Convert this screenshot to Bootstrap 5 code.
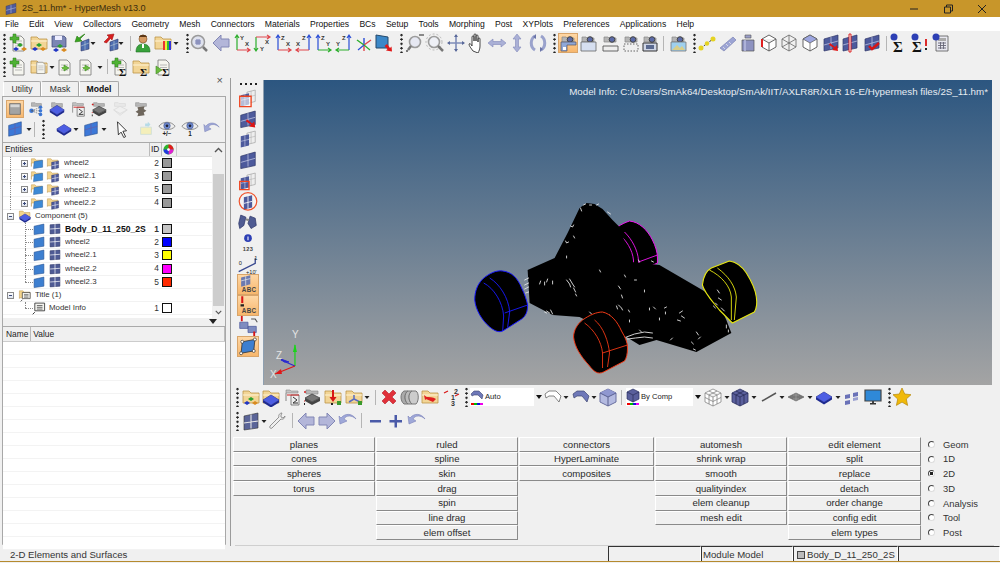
<!DOCTYPE html>
<html lang="en"><head><meta charset="utf-8"><title>HyperMesh</title>
<link href="https://cdn.jsdelivr.net/npm/bootstrap@5.3.0/dist/css/bootstrap.min.css" rel="stylesheet">
<style>
html,body{height:563px;overflow:hidden}
body{font-family:"Liberation Sans",Arial,sans-serif;font-size:9px;line-height:1;background:#f0f0f0;color:#222}
.hm-app{width:1000px;height:563px}
.hm-title{height:17px;background:#c8962a;font-size:9.1px;color:#3a2c10}
.hm-title .ttxt{margin-left:4px}
.hm-win{margin-left:auto;gap:24px;padding-right:13px}
.hm-menu{height:14px;background:#fff;font-size:8.6px;gap:10.25px;padding-left:5px;color:#111}
.hm-tb{height:23px;flex:none}
.hm-tb.one{height:24px}
.ic{width:20px;height:20px;flex:none;display:block}
.dots{width:5px;height:20px;flex:none;background:radial-gradient(circle at 2.5px 2px,#222 1px,transparent 1.3px) 0 0/5px 4.4px repeat-y}
.dots.h{width:20px;height:4px;background:radial-gradient(circle at 2px 2px,#222 1px,transparent 1.3px) 0 0/5px 4px repeat-x}
.sep{width:1px;height:15px;background:#b5b5b5;flex:none}
.drp{width:6px;height:20px;flex:none;display:block}
.l1{margin-left:1px}.l2{margin-left:2px}.l3{margin-left:3px}.l4{margin-left:4px}.l5{margin-left:5px}.l6{margin-left:6px}.l9{margin-left:9px}
.n1{margin-left:-1px}.n3{margin-left:-3px}.n4{margin-left:-4px}
.hm-main{height:468px;flex:none}
.hm-left{width:226px;flex:none;padding-left:2px;position:relative}
.hm-close{position:absolute;right:3px;top:-3px;font-size:11px;color:#555;line-height:1;padding-top:0}
.hm-tabs{height:18px;padding:3px 0 0 1px;border:0;gap:0;align-items:flex-end;font-size:8.6px;flex:none}
.hm-tabs .tabx{height:15px;padding:3px 0 0;width:38px;text-align:center;border:1px solid #a8a8a8;border-bottom:0;border-left-color:#fff;border-radius:2px 2px 0 0;color:#333;background:#f0f0f0;margin:0}
.hm-tabs .tabx.on{font-weight:700;width:40px;color:#111;position:relative}
.hm-box{border:1px solid #a8a8a8;height:449px;background:#f0f0f0;border-bottom-color:#ccc}
.hm-ptb{height:20px;flex:none;padding-left:3px}
.hm-ptb.top{margin-top:2px}
.sel-on{background:linear-gradient(#ffd9a8,#f7b56a);box-shadow:inset 0 0 0 1px #d9a56a}
.ic18{width:18px;height:18px;flex:none;display:block;margin-right:2.3px}
.hm-ptb.top .ic18{margin-right:3px}
.hm-treewrap{height:176px;flex:none;margin-top:3px;border-top:1px solid #aaa}
.hm-tree{width:209px;flex:none;background:#fff}
.hm-thead{height:14px;background:#f0f0f0;border-bottom:1px solid #ddd;font-size:8.4px;color:#222}
.hm-thead .cname{width:147px;padding-left:2px;border-right:1px solid #bbb;height:100%;display:flex;align-items:center}
.hm-thead .cid{width:12px;border-right:1px solid #bbb;height:100%;display:flex;align-items:center;padding-left:1px}
.hm-thead .cclr{width:15px;border-right:1px solid #ccc;height:100%;display:flex;align-items:center;padding-left:1px}
.trow{height:13.2px;border-bottom:1px solid #f2f2f2;font-size:7.9px;color:#333;position:relative}
.trow .nm{flex:1 1 auto;white-space:nowrap;overflow:hidden}
.trow .nm.b{font-weight:700;font-size:8.6px;color:#111}
.trow .idn{width:10px;text-align:right;font-size:8.4px;margin-right:3px;flex:none}
.trow .nm.b + .idn{font-weight:700}
.swt{width:10px;height:10px;border:1px solid #111;flex:none;margin-right:40px}
.sw-g{background:#999}.sw-l{background:#c4c4c4}.sw-b{background:#0000ff}.sw-y{background:#ffff00}.sw-m{background:#ff00ff}.sw-r{background:#ff2a00}.sw-w{background:#fff}
.vl{position:absolute;top:0;bottom:-1px;border-left:1px dotted #888}
.vl.a{left:7px}.vl.b{left:22px}.vl.half{bottom:50%}
.hl{position:absolute;top:50%;border-top:1px dotted #888;left:22px;width:8px}
.pm{width:7px;height:7px;border:1px solid #8a8a8a;background:linear-gradient(#fff,#dde3ee);position:absolute;left:4px;top:3px;display:block}
.pm.in{left:18px}
.pm::before{content:"";position:absolute;left:1px;right:1px;top:2px;height:1px;background:#3b4a7a}
.pm.p::after{content:"";position:absolute;top:1px;bottom:1px;left:2px;width:1px;background:#3b4a7a}
.tic{width:14px;height:14px;flex:none;display:block}
.pad-w{padding-left:27px}.pad-c{padding-left:15px}.pad-k{padding-left:29px}
.gap-a{margin-right:2px}.gap-b{margin-right:4px}.gap-c{margin-right:3px}
.hm-sb{width:13px;flex:none;background:#f0f0f0}
.hm-sb .trk{height:132px;background:#cdcdcd;margin:17px 1px 0}
.hm-sb .ar{height:14px;display:block;width:13px}
.hm-sb .ar.dn{height:11px}
.hm-sash{height:8px;flex:none;position:relative}
.hm-sash::after{content:"";position:absolute;left:206px;top:1px;border:4px solid transparent;border-top:5px solid #222;border-bottom:0}
.hm-prop{flex:1 1 auto;background:#fff;border-top:1px solid #aaa}
.hm-phead{height:15px;background:#f0f0f0;border-bottom:1px solid #ccc;font-size:8.4px;padding-left:1px}
.hm-phead .pc{padding:0 2px;border-right:1px solid #bbb;height:100%;display:flex;align-items:center}
.hm-prop .prow{height:13px;border-bottom:1px solid #f3f3f3}
.hm-sashv{width:5px;flex:none;border-right:1px solid #9b9b9b;margin-right:1px}
.hm-right{width:768px;flex:none}
.hm-top{height:307px;flex:none;padding-top:2px}
.hm-vtb{width:31px;flex:none;padding-left:5px;padding-top:2px}
.hm-vtb .ic{height:20.7px;width:22px}
.hm-vtb .dots.h{margin-bottom:2px;margin-left:2px}
.hm-gfx{width:729px;height:305px;flex:none;background:linear-gradient(#2c5680,#a4a4a4);position:relative;border-left:1px solid #8fa0b0}
.hm-gfx svg{display:block;width:100%;height:100%}
.hm-info{position:absolute;right:4px;top:7px;color:#e8edf2;font-size:9.78px;white-space:nowrap}
.hm-rt{padding-left:3px}
.cmb{height:18px;background:#fff;flex:none;font-size:7.6px;color:#222}
.cmb.a{width:73px}.cmb.c{width:76px}
.cmb .cn{flex:1 1 auto;padding-left:1px}
.cmb .ca{width:9px;height:100%;background:#f0f0f0;display:flex;align-items:center;justify-content:center}
.cmb .ca::after{content:"";border:3.5px solid transparent;border-top:4px solid #111;border-bottom:0}
.cmb .ic14{width:14px;height:18px;display:block;flex:none}
.hm-panel{flex:1 1 auto;padding:5px 0 0 1px;gap:1px;margin-left:0}
.hm-col{gap:0}
.hm-col.w1,.hm-col.w2{width:142px}.hm-col.w3{width:135px}.hm-col.w4{width:132px}.hm-col.w5{width:133px}
.mbtn.btn{--bs-btn-padding-y:0;--bs-btn-padding-x:0;--bs-btn-font-size:9.6px;--bs-btn-border-radius:0;--bs-btn-line-height:1;--bs-btn-color:#2a2a2a;--bs-btn-bg:#f0f0f0;--bs-btn-hover-bg:#f0f0f0;height:14.72px;width:100%;border:0;border-top:1px solid #fff;border-left:1px solid #fff;border-right:1.5px solid #8a8a8a;border-bottom:1.5px solid #8a8a8a;display:block;font-family:inherit}
.hm-rad{padding-left:6px;gap:0;font-size:9.4px;color:#333}
.hm-rad label{height:14.72px;display:flex;align-items:center;gap:8px}
.hm-rad input{appearance:none;width:7px;height:7px;border-radius:50%;margin:0;border:1px solid;border-color:#444 #ddd #ddd #444;background:#fff;flex:none}
.hm-rad input:checked{background:radial-gradient(circle,#222 1.6px,#fff 2px)}
.hm-rule{height:1px;background:#cfcfcf;margin:2px 6px 0 3px;flex:none}
.hm-status{height:15px;flex:none;font-size:9.6px;position:relative}
.hm-status .stx{width:608px;padding-left:10px;padding-top:3px;color:#333}
.hm-status .cellb{height:100%;border-left:1px solid #333;border-top:1px solid #333;border-right:1px solid #fff;display:flex;align-items:center;padding-left:1px;padding-top:1px;color:#333;flex:none}
.w92{width:93px}.w91{width:92px}.w104{width:105px}.w102{width:102px}
.chipb{width:8px;height:8px;border:1px solid #444;background:#bbb;margin:0 2px 0 2px;flex:none}
.hm-foot{height:1px;background:#b58a2e;flex:none}
</style></head>
<body>
<svg width="0" height="0" class="position-absolute" aria-hidden="true"><defs>
<symbol id="fold" viewBox="0 0 20 20"><path d="M2 16V4h6l2 2h8v10z" fill="#f2d596" stroke="#bd9548" stroke-width=".8"/><path d="M2 8h16" stroke="#fff3d4"/></symbol>
<symbol id="balls" viewBox="0 0 20 20"><path d="M10 9l3 2-3 2-3-2z" fill="#2ca02c"/><path d="M6 13l3 2-3 2-3-2z" fill="#2136c4"/><path d="M14 13l3 2-3 2-3-2z" fill="#d98a1e"/></symbol>
<symbol id="page" viewBox="0 0 20 20"><path d="M5 3h8l3 3v12H5z" fill="#f5f5ef" stroke="#777" stroke-width=".8"/><path d="M7 8h7M7 10.500h7M7 13h7" stroke="#aaa" stroke-width=".8"/></symbol>
<symbol id="plus" viewBox="0 0 20 20"><path d="M5 1h3v3h3v3H8v3H5V7H2V4h3z" fill="#4fb233" stroke="#2f7a1c" stroke-width=".5"/></symbol>
<symbol id="mesh" viewBox="0 0 20 20"><path d="M3 6l14-4v13L3 18z" fill="#4d5a9c" stroke="#2f3768" stroke-width=".7"/><path d="M10 4v12M3 12l14-4" stroke="#c9cde6" stroke-width=".7"/></symbol>
<symbol id="meshw" viewBox="0 0 20 20"><path d="M9 4l8-2v11l-8 2z" fill="#eee" stroke="#999" stroke-width=".6"/><path d="M13 3v11M9 9l8-2" stroke="#aaa" stroke-width=".5"/><path d="M3 7l8-2v11l-8 2z" fill="#4d5a9c"/><path d="M7 6v11M3 12l8-2" stroke="#c9cde6" stroke-width=".6"/></symbol>
<symbol id="impc" viewBox="0 0 20 20"><use href="#page"/><use href="#plus"/><use href="#balls" x="2" y="1"/></symbol>
<symbol id="opnc" viewBox="0 0 20 20"><use href="#fold"/><use href="#balls" y="1"/></symbol>
<symbol id="save" viewBox="0 0 20 20"><path d="M3 3h12l2 2v9H3z" fill="#7b86b4" stroke="#3c4576" stroke-width=".7"/><path d="M6 3h7v4H6z" fill="#eef"/><use href="#balls" x="1" y="2"/></symbol>
<symbol id="impm" viewBox="0 0 20 20"><path d="M8 9l8-3v10l-8 2z" fill="#4d6db0" stroke="#2f3768" stroke-width=".6"/><path d="M12 8v9M8 13l8-3" stroke="#cdd" stroke-width=".5"/><path d="M12 1L7 6l2 2-7 1 2-6 2 2 4-3z" fill="#39a51f" stroke="#2b7a17" stroke-width=".6"/></symbol>
<symbol id="expm" viewBox="0 0 20 20"><path d="M8 9l8-3v10l-8 2z" fill="#4d6db0" stroke="#2f3768" stroke-width=".6"/><path d="M12 8v9M8 13l8-3" stroke="#cdd" stroke-width=".5"/><path d="M2 9l5-5-2-2 7-1-2 6-1.500-1.500-4 4.500z" fill="#d71f1f" stroke="#a51515" stroke-width=".6"/></symbol>
<symbol id="pers" viewBox="0 0 20 20"><circle cx="10" cy="6" r="4" fill="#d49a63" stroke="#7a4c21" stroke-width=".6"/><path d="M6 4c1-3 7-3 8 0z" fill="#5b3716"/><path d="M3 19c0-6 3-8 7-8s7 2 7 8z" fill="#38a23c" stroke="#1f6f24" stroke-width=".6"/><path d="M9 11h2v4H9z" fill="#fff"/></symbol>
<symbol id="rain" viewBox="0 0 20 20"><use href="#fold"/><path d="M10 8h2v9h-2z" fill="#e33"/><path d="M12 8h2v9h-2z" fill="#ee3"/><path d="M14 8h2v9h-2z" fill="#3b3"/><path d="M16 8h2v9h-2z" fill="#33d"/></symbol>
<symbol id="zfit" viewBox="0 0 20 20"><circle cx="9" cy="9" r="6.500" fill="#dfe2ee" stroke="#9a9a9a" stroke-width="1.500"/><path d="M14 14l4 4" stroke="#777" stroke-width="2.500"/><path d="M6 8h6M6 10h6M8 6v6M10 6v6" stroke="#6a70a8" stroke-width=".9"/></symbol>
<symbol id="larr" viewBox="0 0 20 20"><path d="M2 10l8-8v4h8v8h-8v4z" fill="#b3b6d9" stroke="#8287b5"/></symbol>
<symbol id="rarr" viewBox="0 0 20 20"><path d="M18 10l-8-8v4H2v8h8v4z" fill="#b3b6d9" stroke="#8287b5"/></symbol>
<symbol id="ax1" viewBox="0 0 20 20"><path d="M5 17V3M3 5l2-3 2 3" fill="none" stroke="#2cae2c" stroke-width="1.200"/><path d="M5 17h13m-3-2l3 2-3 2" fill="none" stroke="#e0474c" stroke-width="1.200"/><text x="8" y="7" class="axt">Y</text><text x="13" y="13" class="axt">X</text></symbol>
<symbol id="ax2" viewBox="0 0 20 20"><path d="M4 4v14M2 15l2 3 2-3" fill="none" stroke="#2cae2c" stroke-width="1.200"/><path d="M4 4h14m-3-2l3 2-3 2" fill="none" stroke="#e0474c" stroke-width="1.200"/><text x="13" y="11" class="axt">X</text><text x="8" y="18" class="axt">Y</text></symbol>
<symbol id="ax3" viewBox="0 0 20 20"><path d="M5 17V3M3 5l2-3 2 3" fill="none" stroke="#2a4ed6" stroke-width="1.200"/><path d="M5 17h13m-3-2l3 2-3 2" fill="none" stroke="#e0474c" stroke-width="1.200"/><text x="8" y="7" class="axt">Z</text><text x="13" y="13" class="axt">X</text></symbol>
<symbol id="ax4" viewBox="0 0 20 20"><path d="M16 17V3M14 5l2-3 2 3" fill="none" stroke="#2a4ed6" stroke-width="1.200"/><path d="M16 17H3m3-2l-3 2 3 2" fill="none" stroke="#e0474c" stroke-width="1.200"/><text x="9" y="7" class="axt">Z</text><text x="3" y="13" class="axt">X</text></symbol>
<symbol id="ax5" viewBox="0 0 20 20"><path d="M5 17V3M3 5l2-3 2 3" fill="none" stroke="#2a4ed6" stroke-width="1.200"/><path d="M5 17h13m-3-2l3 2-3 2" fill="none" stroke="#2cae2c" stroke-width="1.200"/><text x="8" y="7" class="axt">Z</text><text x="13" y="13" class="axt">Y</text></symbol>
<symbol id="ax6" viewBox="0 0 20 20"><path d="M16 17V3M14 5l2-3 2 3" fill="none" stroke="#2a4ed6" stroke-width="1.200"/><path d="M16 17H3m3-2l-3 2 3 2" fill="none" stroke="#2cae2c" stroke-width="1.200"/><text x="9" y="7" class="axt">Z</text><text x="3" y="13" class="axt">Y</text></symbol>
<symbol id="ax7" viewBox="0 0 20 20"><path d="M10 12V5" stroke="#2a4ed6" stroke-width="1.400"/><path d="M10 12l7-5" stroke="#e0474c" stroke-width="1.400"/><path d="M10 12L3 7" stroke="#2cae2c" stroke-width="1.400"/><path d="M10 12v6" stroke="#e0474c" stroke-width="1.400"/><path d="M10 12l6 5" stroke="#2cae2c" stroke-width="1.200"/><path d="M10 12l-6 5" stroke="#2a4ed6" stroke-width="1.200"/></symbol>
<symbol id="scrn" viewBox="0 0 20 20"><path d="M2 2l12 2v11L2 15z" fill="#3c88c8" stroke="#24496b"/><path d="M13 11l3 4 1.500-1.500.5 5-6-1 1.500-1.500-3-3z" fill="#e01818"/></symbol>
<symbol id="zmin" viewBox="0 0 20 20"><circle cx="10" cy="9" r="5.500" fill="#e6e8f2" stroke="#9c9c9c" stroke-width="1.600"/><path d="M6 13l-3 4" stroke="#777" stroke-width="2.500"/><path d="M14 2h5" stroke="#222"/><path d="M1 18h2M2 17v2" stroke="#222" stroke-width=".7"/></symbol>
<symbol id="zdsh" viewBox="0 0 20 20"><circle cx="9" cy="9" r="5.500" fill="#eef0f6" stroke="#9c9c9c" stroke-width="1.600"/><circle cx="9" cy="9" r="8" fill="none" stroke="#aaa" stroke-dasharray="2 2" stroke-width=".8"/><path d="M13 13l5 5" stroke="#777" stroke-width="2.500"/></symbol>
<symbol id="pan" viewBox="0 0 20 20"><path d="M10 2v16M2 10h16" stroke="#7e8cb8" stroke-width="1.600"/><path d="M10 1l-2 3h4zM10 19l-2-3h4zM1 10l3-2v4zM19 10l-3-2v4z" fill="#5b6a9a"/></symbol>
<symbol id="hand" viewBox="0 0 20 20"><path d="M6 18c-2-3-4-5-4-7 1-1 2 0 3 2V4c0-1.500 2-1.500 2 0v4-6c0-1.500 2-1.500 2 0v6-5c0-1.500 2-1.500 2 0v6-3c0-1.500 2-1.500 2 0v7c0 3-1 5-2 7z" fill="#fff" stroke="#333" stroke-width=".9"/></symbol>
<symbol id="lr" viewBox="0 0 20 20"><path d="M1 10l5-4v2.500h8V6l5 4-5 4v-2.500H6V14z" fill="#aab0d6" stroke="#8188b8" stroke-width=".6"/></symbol>
<symbol id="ud" viewBox="0 0 20 20"><path d="M10 1l4 5h-2.500v8H14l-4 5-4-5h2.500V6H6z" fill="#aab0d6" stroke="#8188b8" stroke-width=".6"/></symbol>
<symbol id="rot" viewBox="0 0 20 20"><path d="M7 3c-5 3-5 11 0 14M13 3c5 3 5 11 0 14" fill="none" stroke="#9aa2cc" stroke-width="3"/><path d="M8 1v5l-3-2zM12 19v-5l3 2z" fill="#6b75a8"/></symbol>
<symbol id="cam" viewBox="0 0 20 20"><path d="M4 9V4h4l1 1h7v4z" fill="#b6b6b6" stroke="#888" stroke-width=".7"/><circle cx="12" cy="6.500" r="2.800" fill="#5b6aa8" stroke="#444"/></symbol>
<symbol id="vw1" viewBox="0 0 20 20"><use href="#cam"/><path d="M3 9h15v3H9v6H3z" fill="#8fa8d8" stroke="#556" stroke-width=".7"/><path d="M5 14h3v3H5z" fill="#fff"/></symbol>
<symbol id="vw2" viewBox="0 0 20 20"><use href="#cam"/><path d="M3 9h15v9H3z" fill="#d6dff0" stroke="#666" stroke-width=".8"/></symbol>
<symbol id="vw3" viewBox="0 0 20 20"><use href="#cam"/><path d="M3 13h15v5H3z" fill="#eee" stroke="#555" stroke-width=".9"/></symbol>
<symbol id="vw4" viewBox="0 0 20 20"><use href="#cam"/><path d="M3 11h14v7H3z" fill="none" stroke="#555" stroke-width=".9" stroke-dasharray="1.500 1.500"/></symbol>
<symbol id="vw5" viewBox="0 0 20 20"><use href="#cam"/><path d="M3 10h14v8H3z" fill="#cfd6e6" stroke="#333" stroke-width="1"/><path d="M6 12h8v4H6z" fill="#5a6a90"/></symbol>
<symbol id="vw6" viewBox="0 0 20 20"><use href="#cam"/><path d="M3 9h15v9H3z" fill="#9fd0ee" stroke="#777" stroke-width=".8"/><path d="M4 17l5-5 3 3 2-2 3 4z" fill="#d9cf8a"/></symbol>
<symbol id="lin" viewBox="0 0 20 20"><path d="M4 15L16 6" stroke="#333" stroke-dasharray="2 1.500"/><circle cx="4" cy="15" r="2.500" fill="#e5d322"/><circle cx="10" cy="10.500" r="2.200" fill="#e5d322"/><circle cx="16" cy="6" r="2.500" fill="#e5d322"/></symbol>
<symbol id="rod" viewBox="0 0 20 20"><path d="M2 15L15 4l3 3L6 18z" fill="#9ca4d4" stroke="#7c84b4" stroke-width=".7"/><path d="M5 14l2 2M8 11l2 2M11 9l2 2" stroke="#eee" stroke-width=".7"/></symbol>
<symbol id="wgt" viewBox="0 0 20 20"><path d="M7 5h6v-3H7z" fill="#9a9ec8" stroke="#555" stroke-width=".6"/><path d="M4 7h12v11H4z" fill="#8d92c0" stroke="#555" stroke-width=".7"/><path d="M7 7v11" stroke="#b8bce0" stroke-width="1.500"/></symbol>
<symbol id="cubr" viewBox="0 0 20 20"><path d="M10 2l7 4v8l-7 4-7-4V6zM3 6l7 4 7-4M10 10v8" fill="#fff" stroke="#555" stroke-width=".9"/><path d="M3 6v8" stroke="#e02020" stroke-width="2"/></symbol>
<symbol id="cubw" viewBox="0 0 20 20"><path d="M10 2l7 4v8l-7 4-7-4V6zM3 6l7 4 7-4M10 10v8M3 14l7-4 7 4M10 2v8" fill="none" stroke="#666" stroke-width=".8"/></symbol>
<symbol id="cubb" viewBox="0 0 20 20"><path d="M10 2l7 4v8l-7 4-7-4V6z" fill="#fff" stroke="#555" stroke-width=".9"/><path d="M10 2l7 4-7 4-7-4z" fill="#9da6e0" stroke="#555" stroke-width=".7"/><path d="M10 10v8" stroke="#555" stroke-width=".7"/></symbol>
<symbol id="mred" viewBox="0 0 20 20"><use href="#mesh"/><path d="M9 10l5 4 2-2 1 6-6-1 2-2-5-3z" fill="#de1515"/></symbol>
<symbol id="mpln" viewBox="0 0 20 20"><use href="#mesh"/><path d="M9 1h2v18H9z" fill="#eee" stroke="#de1515" stroke-width=".9"/></symbol>
<symbol id="mchk" viewBox="0 0 20 20"><use href="#mesh"/><path d="M7 13l3 3 7-6" fill="none" stroke="#d81515" stroke-width="2.400"/></symbol>
<symbol id="sum" viewBox="0 0 20 20"><circle cx="6" cy="4" r="3.500" fill="#2d3fb4"/><text x="5" y="19" class="sgt">Σ</text></symbol>
<symbol id="sumr" viewBox="0 0 20 20"><circle cx="5" cy="4" r="3.500" fill="#2d3fb4"/><text x="2" y="19" class="sgt">Σ</text><path d="M16 6v7" stroke="#d81515" stroke-width="1.800"/><path d="M15 15h2v2h-2z" fill="#222"/></symbol>
<symbol id="calc" viewBox="0 0 20 20"><path d="M5 3h12v15H5z" fill="#e8e8f0" stroke="#555" stroke-width=".8"/><path d="M7 5h8v3H7z" fill="#aaa"/><path d="M7 10h8M7 12.500h8M7 15h8M9.500 9v7M12.500 9v7" stroke="#667" stroke-width=".9"/><circle cx="5" cy="4" r="3.500" fill="#2d3fb4"/></symbol>
<symbol id="imps" viewBox="0 0 20 20"><use href="#page"/><use href="#plus"/></symbol>
<symbol id="opns" viewBox="0 0 20 20"><use href="#fold"/><use href="#page" x="4" y="3" width="15" height="15"/></symbol>
<symbol id="pagg" viewBox="0 0 20 20"><use href="#page"/><path d="M10 8v6l5-3z" fill="#6bbb3f" stroke="#3c8a1f" stroke-width=".6"/><path d="M8 10h3v2H8z" fill="#6bbb3f"/></symbol>
<symbol id="sigp" viewBox="0 0 20 20"><use href="#page"/><use href="#plus"/><text x="9" y="19" class="sgb">Σ</text></symbol>
<symbol id="sigf" viewBox="0 0 20 20"><use href="#fold"/><text x="9" y="19" class="sgb">Σ</text></symbol>
<symbol id="sigg" viewBox="0 0 20 20"><use href="#page"/><path d="M3 9v8l6-4z" fill="#6bbb3f" stroke="#3c8a1f" stroke-width=".6"/><text x="9" y="19" class="sgb">Σ</text></symbol>
<symbol id="dia" viewBox="0 0 20 20"><path d="M10 5l8 5-8 5-8-5z" fill="#3a4ad0" stroke="#222a80" stroke-width=".7"/><path d="M2 10v2.500l8 5 8-5V10l-8 5z" fill="#1e2a90"/><path d="M10 5l8 5-8 5-8-5z" fill="#5a6cf0" opacity=".6"/></symbol>
<symbol id="grayb" viewBox="0 0 20 20"><path d="M4 4h12v12H4z" fill="#a3a3a3" stroke="#666" stroke-width=".8"/><path d="M5 5h10v3H5z" fill="#d6d6d6"/></symbol>
<symbol id="fcon" viewBox="0 0 20 20"><path d="M5 7V3h4l1 1h6v3z" fill="#b8b8b8" stroke="#888" stroke-width=".6"/><circle cx="5" cy="12" r="2.500" fill="#3c78d8"/><circle cx="15" cy="8" r="2" fill="#3c78d8"/><circle cx="15" cy="12" r="2" fill="#3c78d8"/><circle cx="15" cy="16" r="2" fill="#3c78d8"/><path d="M5 12l10-4M5 12h10M5 12l10 4" stroke="#555" stroke-width=".7" stroke-dasharray="1.500 1"/></symbol>
<symbol id="fdia" viewBox="0 0 20 20"><path d="M4 8V3h4l1 1h7v4z" fill="#b8b8b8" stroke="#888" stroke-width=".6"/><use href="#dia" y="1"/></symbol>
<symbol id="fres" viewBox="0 0 20 20"><path d="M4 14V3h4l1 1h7v2H4z" fill="#c4c4c4" stroke="#888" stroke-width=".6"/><path d="M9 8h8v10H9z" fill="#eee" stroke="#555" stroke-width=".7"/><path d="M5 8h12" stroke="#d02020"/><path d="M11 10l4 3-4 3h5" fill="none" stroke="#333"/></symbol>
<symbol id="fblk" viewBox="0 0 20 20"><path d="M4 7V3h4l1 1h7v3z" fill="#b8b8b8" stroke="#888" stroke-width=".6"/><path d="M10 7l8 4-8 4-7-4z" fill="#777" stroke="#333" stroke-width=".7"/><path d="M3 11v3l7 4 8-4v-3l-8 4z" fill="#444"/><path d="M2 5h2M3 4v2M2 14h1" stroke="#d02020"/><path d="M2 17h1" stroke="#222" stroke-width="2"/></symbol>
<symbol id="fgh1" viewBox="0 0 20 20" opacity=".35"><path d="M4 7V3h4l1 1h7v3z" fill="#ddd" stroke="#bbb"/><path d="M10 7l8 4-8 4-7-4zM3 11l7 6 8-6" fill="#eee" stroke="#bbb"/></symbol>
<symbol id="fscr" viewBox="0 0 20 20"><path d="M4 7V3h4l1 1h7v3z" fill="#b8b8b8" stroke="#888" stroke-width=".6"/><path d="M6 8l8-1-1 3 3 2-3 2 1 3-8 1 1-3-3-2 3-2z" fill="#6e665c"/></symbol>
<symbol id="mblue" viewBox="0 0 20 20"><path d="M3 6l14-4v13L3 18z" fill="#3c78d8" stroke="#27508f" stroke-width=".7"/><path d="M10 4v12M3 11l14-4" stroke="#6e5a9c" stroke-width=".7"/></symbol>
<symbol id="curs" viewBox="0 0 20 20"><path d="M5 2l10 10-4 .5 3 6-2 1-3-6-3 3z" fill="#fff" stroke="#111" stroke-width=".9"/></symbol>
<symbol id="bin" viewBox="0 0 20 20"><path d="M4 8h12v8H4z" fill="#f4efba" stroke="#cfe0d8"/><path d="M11 3h3v3h2l-3 3-3-3h1z" transform="rotate(-90 12 6)" fill="#b6dbe8"/></symbol>
<symbol id="eye" viewBox="0 0 20 20"><path d="M1 7c4-6 14-6 18 0-4 5-14 5-18 0z" fill="#eee" stroke="#777" stroke-width=".9"/><circle cx="10" cy="6.500" r="3.600" fill="#6f8bd0" stroke="#3c4c88" stroke-width=".6"/><circle cx="10" cy="6.500" r="1.500" fill="#223"/></symbol>
<symbol id="und" viewBox="0 0 20 20"><path d="M18 8c-4-4-10-4-12 0l3 2-7 3-1-8 2 2c4-5 11-5 15 1z" fill="#9fa8d8" stroke="#7a82b8" stroke-width=".6"/></symbol>
<symbol id="fb" viewBox="0 0 20 20"><path d="M2 15V4h5l2 2h8v4H2z" fill="#f3d48d" stroke="#bd9548" stroke-width=".7"/><path d="M6 8l12-2v10L5 18z" fill="#3d8ad6" stroke="#2a5d98" stroke-width=".7"/></symbol>
<symbol id="fm" viewBox="0 0 20 20"><path d="M2 15V4h5l2 2h8v8H2z" fill="#f3d48d" stroke="#bd9548" stroke-width=".7"/><path d="M8 9l10-2v10L8 19z" fill="#4d5a9c" stroke="#2f3768" stroke-width=".6"/><path d="M13 8v10M8 14l10-2" stroke="#fff" stroke-width=".8"/></symbol>
<symbol id="cmpf" viewBox="0 0 20 20"><path d="M2 11V3h5l2 2h8v6z" fill="#f3d48d" stroke="#bd9548" stroke-width=".7"/><use href="#dia" y="2"/></symbol>
<symbol id="pane" viewBox="0 0 20 20"><path d="M3 6l14-3v13L3 18z" fill="#3d7fd0" stroke="#27508f" stroke-width=".8"/></symbol>
<symbol id="msq" viewBox="0 0 20 20"><path d="M3 4l14-1v13L3 17z" fill="#4e5a94" stroke="#2f3768" stroke-width=".8"/><path d="M10 3v14M3 10l14-1" stroke="#fff"/></symbol>
<symbol id="lab" viewBox="0 0 20 20"><path d="M4 16l-3 3" stroke="#333" stroke-width="1.400"/><path d="M4 3h14v11H4z" fill="#f4f4f0" stroke="#333" stroke-width="1.200"/><path d="M7 6.500h8M7 9h8M7 11.500h8" stroke="#333"/></symbol>
<symbol id="flab" viewBox="0 0 20 20"><path d="M2 15V4h5l2 2h8v8H2z" fill="#f3d48d" stroke="#bd9548" stroke-width=".7"/><use href="#lab" x="3" y="4" width="16" height="16"/></symbol>
<symbol id="clr" viewBox="0 0 12 12"><circle cx="6" cy="6" r="5.500" fill="#2db52d"/><path d="M6 6V.5A5.500 5.500 0 0 1 11.500 6z" fill="#e21c1c"/><path d="M6 6h5.500A5.500 5.500 0 0 1 6 11.500z" fill="#e01fd4"/><path d="M6 6v5.500A5.500 5.500 0 0 1 .5 6z" fill="#2439e0"/><circle cx="6" cy="6" r="1.500" fill="#fff"/></symbol>
<symbol id="v1" viewBox="0 0 20 20"><use href="#meshw"/><path d="M2 8h11v10H2z" fill="rgba(255,255,255,.6)" stroke="#f0441f" stroke-width="1.300"/></symbol>
<symbol id="v3" viewBox="0 0 20 20"><use href="#meshw"/></symbol>
<symbol id="v5" viewBox="0 0 20 20"><use href="#meshw"/><path d="M2 10h9v8H2z" fill="none" stroke="#f0441f" stroke-width="1.300"/></symbol>
<symbol id="v6" viewBox="0 0 20 20"><circle cx="10" cy="10" r="8.500" fill="#f4f4f4" stroke="#f0552f" stroke-width="1.200"/><path d="M6 6l8-2v12l-8 2z" fill="#4d5a9c"/><path d="M10 5v12M6 12l8-2" stroke="#fff" stroke-width=".8"/></symbol>
<symbol id="bino" viewBox="0 0 20 20"><path d="M3 3l5 2-2 8-4 3-1-5zM17 6l-5-2-2 7 3 5 5-3z" fill="#4f5b92" stroke="#2e3668" stroke-width=".7"/><path d="M8 7l3 1" stroke="#888" stroke-width="2"/></symbol>
<symbol id="num" viewBox="0 0 20 20"><circle cx="10" cy="5" r="3.700" fill="#2d3fb4"/><path d="M10 3.500v3.500" stroke="#fff"/><text x="10" y="17.500" class="ct">123</text></symbol>
<symbol id="scal" viewBox="0 0 20 20"><path d="M1 17L17 9V4" fill="none" stroke="#3a4a90" stroke-width="1.300"/><text x="1" y="11" class="sm">0</text><text x="16" y="6" class="sm">1</text><text x="8" y="19" class="sm">+10'</text></symbol>
<symbol id="abc1" viewBox="0 0 18 18"><path d="M3 3l8-2v8l-8 2z" fill="#6c7ab0"/><path d="M7 2v8M3 6l8-2" stroke="#eee" stroke-width=".6"/><text x="10" y="16" class="ct">ABC</text></symbol>
<symbol id="abc2" viewBox="0 0 18 18"><path d="M4 1v6" stroke="#d81515" stroke-width="1.800"/><path d="M2.500 8h3v2h-3z" fill="#222"/><text x="10" y="16" class="ct">ABC</text></symbol>
<symbol id="swap" viewBox="0 0 20 20"><path d="M2 6h8v6H2zM10 10h8v6h-8z" fill="#7f8cc0" stroke="#4d5a9c" stroke-width=".7"/><path d="M4 0v5" stroke="#d81515" stroke-width="1.800"/><path d="M16 15v5" stroke="#d81515" stroke-width="1.800"/><path d="M13 3h4l2 3" fill="none" stroke="#555"/></symbol>
<symbol id="pan4" viewBox="0 0 18 18"><path d="M4 5l11-2-1 10-11 2z" fill="#3d7fd0" stroke="#333" stroke-width=".7"/><circle cx="4" cy="5" r="1.300" fill="#fff" stroke="#333" stroke-width=".6"/><circle cx="15" cy="3" r="1.300" fill="#fff" stroke="#333" stroke-width=".6"/><circle cx="14" cy="13" r="1.300" fill="#fff" stroke="#333" stroke-width=".6"/><circle cx="3" cy="15" r="1.300" fill="#fff" stroke="#333" stroke-width=".6"/></symbol>
<symbol id="bcyl" viewBox="0 0 20 20"><path d="M3 7l4-3 7 0 5 5-2 6-5-6-5 0-3 2z" fill="#6e78b8" stroke="#3c4570" stroke-width=".7"/></symbol>
<symbol id="wcyl" viewBox="0 0 20 20"><path d="M3 7l4-3 7 0 5 5-2 6-5-6-5 0-3 2z" fill="#fff" stroke="#555" stroke-width=".7"/></symbol>
<symbol id="bcub" viewBox="0 0 20 20"><path d="M10 2l8 4v9l-8 4-8-4V6z" fill="#b4bae0" stroke="#6a70a0"/><path d="M10 2l8 4-8 4-8-4z" fill="#8f97d0"/><path d="M2 6l8 4 8-4M10 10v9" fill="none" stroke="#5a6090"/></symbol>
<symbol id="fdn" viewBox="0 0 20 20"><use href="#fold"/><path d="M10 3v8" stroke="#d81515" stroke-width="2"/><path d="M6.500 10L10 15l3.500-5z" fill="#d81515"/><path d="M14 14h4v4h-4z" fill="#3a9a2c"/><path d="M8 16h2v2H8z" fill="#222"/></symbol>
<symbol id="fax" viewBox="0 0 20 20"><use href="#fold"/><path d="M10 8v4l-5 3M10 12l6 3" fill="none" stroke="#5a6cc0" stroke-width="1.500"/><path d="M14 14h4v4h-4z" fill="#3a9a2c"/></symbol>
<symbol id="fbl" viewBox="0 0 20 20"><use href="#fold"/><use href="#dia" y="3"/></symbol>
<symbol id="xred" viewBox="0 0 20 20"><path d="M3 6l3-3 4 4 4-4 3 3-4 4 4 4-3 3-4-4-4 4-3-3 4-4z" fill="#e0303a" stroke="#b5222a" stroke-width=".6"/></symbol>
<symbol id="stck" viewBox="0 0 20 20"><path d="M5 4c-4 2-4 10 0 13h4c-4-3-4-11 0-13z" fill="#aaa" stroke="#777"/><path d="M9 4c-4 2-4 10 0 13h4c-4-3-4-11 0-13z" fill="#bbb" stroke="#777"/><path d="M13 4c-4 2-4 10 0 13h4c3-3 3-11 0-13z" fill="#ccc" stroke="#777"/></symbol>
<symbol id="forg" viewBox="0 0 20 20"><use href="#fold"/><path d="M8 11l-4-3 1 5z" fill="#e02020"/><path d="M5 10c4 0 8 0 11 2l-3 3-7-3z" fill="#e02020"/></symbol>
<symbol id="nums" viewBox="0 0 20 20"><text x="13" y="7" class="ct2">2</text><text x="10" y="13" class="ct2">1</text><text x="10" y="19" class="ct2">3</text><path d="M3 6l4-2M14 9l4-2" stroke="#d81515" stroke-width="1.200"/></symbol>
<symbol id="lin2" viewBox="0 0 20 20"><path d="M3 14L17 6" stroke="#555" stroke-width="1.500"/></symbol>
<symbol id="dg" viewBox="0 0 20 20"><path d="M10 6l8 4-8 4-8-4z" fill="#777" stroke="#555" stroke-width=".6"/><path d="M7 8h6M7 12h6M10 6v8" stroke="#aaa" stroke-width=".6"/></symbol>
<symbol id="wcub" viewBox="0 0 20 20"><path d="M10 2l8 4v9l-8 4-8-4V6zM2 6l8 4 8-4M10 10v9M6 4l8 4v9M14 4L6 8v9M2 10.500l8 4 8-4" fill="#fff" stroke="#777" stroke-width=".7"/></symbol>
<symbol id="scub" viewBox="0 0 20 20"><path d="M10 2l8 4v9l-8 4-8-4V6z" fill="#5a5f9c" stroke="#2a2f60" stroke-width=".8"/><path d="M2 6l8 4 8-4M10 10v9M6 4l8 4v9M14 4L6 8v9" fill="none" stroke="#23264f" stroke-width=".7"/></symbol>
<symbol id="scub2" viewBox="0 0 14 18"><path d="M7 1l6 3v7l-6 3-6-3V4z" fill="#5a5f9c" stroke="#2a2f60" stroke-width=".7"/><path d="M1 4l6 3 6-3M7 7v7" fill="none" stroke="#23264f" stroke-width=".6"/><path d="M1 15h3v2H1z" fill="#e00"/><path d="M4 15h3v2H4z" fill="#0b0"/><path d="M7 15h3v2H7z" fill="#11d"/><path d="M10 15h3v2h-3z" fill="#e0e"/></symbol>
<symbol id="cyl2" viewBox="0 0 14 18"><path d="M1 6l3-3h5l4 4-1 4-4-4H4l-2 1z" fill="#6e78b8" stroke="#3c4570" stroke-width=".6"/><path d="M1 15h3v2H1z" fill="#e00"/><path d="M4 15h3v2H4z" fill="#0b0"/><path d="M7 15h3v2H7z" fill="#11d"/><path d="M10 15h3v2h-3z" fill="#e0e"/></symbol>
<symbol id="sqs" viewBox="0 0 20 20"><path d="M3 8l5-1v4l-5 1zM11 6l5-1v4l-5 1zM3 14l5-1v4l-5 1z" fill="#6a72b8"/><path d="M11 11l5-1v3l-5 1z" fill="#9aa0d0"/></symbol>
<symbol id="mon" viewBox="0 0 20 20"><path d="M2 3h16v11H2z" fill="#2f89d8" stroke="#444" stroke-width="1.200"/><path d="M7 16h6v1.500H7z" fill="#333"/><path d="M9 14h2v2H9z" fill="#444"/></symbol>
<symbol id="star" viewBox="0 0 20 20"><path d="M10 1l2.700 6 6.300.7-4.700 4.300 1.300 6.400-5.600-3.300-5.600 3.300 1.300-6.400L1 7.700 7.300 7z" fill="#f0b90a" stroke="#b5860a" stroke-width=".7"/></symbol>
<symbol id="grd" viewBox="0 0 20 20"><path d="M3 5l14-3v15L3 19z" fill="#5a6498" stroke="#333" stroke-width=".6"/><path d="M10 3.500v14M3 12l14-2" stroke="#e6e6e6" stroke-width="1.100"/></symbol>
<symbol id="wrn" viewBox="0 0 20 20"><path d="M15 2c-2 0-4 2-3 4l-9 9c-1 2 1 3 2 2l9-9c2 1 4-1 4-3l-2 2-2-1v-2z" fill="#eee" stroke="#888" stroke-width=".9"/></symbol>
<symbol id="mns" viewBox="0 0 20 20"><path d="M4 9h11v2.500H4z" fill="#4a5aa8"/></symbol>
<symbol id="pls" viewBox="0 0 20 20"><path d="M8.500 4H11v5h5v2.500h-5v5H8.500v-5h-5V9h5z" fill="#4a5aa8"/></symbol>
<symbol id="dropx" viewBox="0 0 6 20"><path d="M.5 9h5L3 12z" fill="#222"/></symbol>
<symbol id="cup" viewBox="0 0 13 14"><path d="M3 9l3.500-3.500L10 9" fill="none" stroke="#555" stroke-width="1.400"/></symbol>
<symbol id="cdn" viewBox="0 0 13 14"><path d="M3 5l3.500 3.500L10 5" fill="none" stroke="#555" stroke-width="1.400"/></symbol>
</defs></svg>
<style>
.axt{font:700 6px "Liberation Sans",sans-serif;fill:#333}
.sgt{font:700 15px "Liberation Serif",serif;fill:#111}
.sgb{font:700 11px "Liberation Serif",serif;fill:#111}
.ct{font:700 5.500px "Liberation Sans",sans-serif;fill:#444;text-anchor:middle;letter-spacing:.3px}
.ct2{font:700 7px "Liberation Sans",sans-serif;fill:#333}
.sm{font:5.500px "Liberation Sans",sans-serif;fill:#222}
.eyet{font:700 7px "Liberation Sans",sans-serif;fill:#222;text-anchor:middle}
</style>
<div class="hm-app d-flex flex-column">
  <div class="hm-title d-flex align-items-center ps-1">
    <svg class="tic" viewBox="0 0 20 20"><use href="#mesh"/></svg><span class="ttxt">2S_11.hm* - HyperMesh v13.0</span>
    <div class="hm-win d-flex align-items-center">
      <svg width="10" height="10" viewBox="0 0 10 10"><path d="M1 5h8" stroke="#222"/></svg>
      <svg width="10" height="10" viewBox="0 0 10 10"><path d="M1.500 3h6v6h-6zM3.500 3V1h6v6h-2" fill="none" stroke="#222"/></svg>
      <svg width="10" height="10" viewBox="0 0 10 10"><path d="M1 1l8 8M9 1l-8 8" stroke="#222"/></svg>
    </div>
  </div>
  <div class="hm-menu d-flex align-items-center">
    <span>File</span><span>Edit</span><span>View</span><span>Collectors</span><span>Geometry</span><span>Mesh</span><span>Connectors</span><span>Materials</span><span>Properties</span><span>BCs</span><span>Setup</span><span>Tools</span><span>Morphing</span><span>Post</span><span>XYPlots</span><span>Preferences</span><span>Applications</span><span>Help</span>
  </div>
  <div class="hm-tb one d-flex align-items-center ps-0">
    <i class="dots l2"></i>
    <svg class="ic l1"><use href="#impc"/></svg><svg class="ic l1"><use href="#opnc"/></svg><svg class="ic"><use href="#save"/></svg>
    <svg class="ic l4"><use href="#impm"/></svg><svg class="drp n3"><use href="#dropx"/></svg>
    <svg class="ic l6"><use href="#expm"/></svg><svg class="drp n4"><use href="#dropx"/></svg>
    <i class="sep l6"></i>
    <svg class="ic l2"><use href="#pers"/></svg><svg class="ic"><use href="#rain"/></svg><svg class="drp"><use href="#dropx"/></svg>
    <i class="dots l6"></i>
    <svg class="ic n1"><use href="#zfit"/></svg><svg class="ic l2"><use href="#larr"/></svg>
    <svg class="ic l1"><use href="#ax1"/></svg><svg class="ic"><use href="#ax2"/></svg><svg class="ic l1"><use href="#ax3"/></svg><svg class="ic"><use href="#ax4"/></svg><svg class="ic"><use href="#ax5"/></svg><svg class="ic"><use href="#ax6"/></svg><svg class="ic l1"><use href="#ax7"/></svg><svg class="ic"><use href="#scrn"/></svg>
    <i class="dots l5"></i>
    <svg class="ic l1"><use href="#zmin"/></svg><svg class="ic"><use href="#zdsh"/></svg><svg class="ic l1"><use href="#pan"/></svg><svg class="ic l1"><use href="#hand"/></svg><svg class="ic"><use href="#lr"/></svg><svg class="ic"><use href="#ud"/></svg><svg class="ic l1"><use href="#rot"/></svg>
    <i class="dots l4"></i>
    <svg class="ic l1 sel-on"><use href="#vw1"/></svg><svg class="ic"><use href="#vw2"/></svg><svg class="ic l2"><use href="#vw3"/></svg><svg class="ic l1"><use href="#vw4"/></svg><svg class="ic n1"><use href="#vw5"/></svg>
    <i class="sep l3"></i>
    <svg class="ic l4"><use href="#vw6"/></svg>
    <i class="dots l4"></i>
    <svg class="ic"><use href="#lin"/></svg><svg class="ic l1"><use href="#rod"/></svg><svg class="ic"><use href="#wgt"/></svg><svg class="ic l1"><use href="#cubr"/></svg><svg class="ic"><use href="#cubw"/></svg><svg class="ic l1"><use href="#cubb"/></svg><svg class="ic l1"><use href="#mred"/></svg><svg class="ic n1"><use href="#mpln"/></svg><svg class="ic l2"><use href="#mchk"/></svg>
    <i class="sep l4"></i>
    <svg class="ic l1"><use href="#sum"/></svg><svg class="ic l2"><use href="#sumr"/></svg><svg class="ic l1"><use href="#calc"/></svg>
  </div>
  <div class="hm-tb d-flex align-items-center">
    <i class="dots l2"></i>
    <svg class="ic l1"><use href="#imps"/></svg><svg class="ic l1"><use href="#opns"/></svg><svg class="drp"><use href="#dropx"/></svg>
    <svg class="ic n1"><use href="#pagg"/></svg><svg class="ic l1"><use href="#pagg"/></svg><svg class="drp l2"><use href="#dropx"/></svg>
    <i class="sep l4"></i>
    <svg class="ic l2"><use href="#sigp"/></svg><svg class="ic l1"><use href="#sigf"/></svg><svg class="ic l2"><use href="#sigg"/></svg>
  </div>
  <div class="hm-main d-flex">
    <div class="hm-left d-flex flex-column">
      <span class="hm-close">×</span>
      <div class="nav hm-tabs">
        <span class="tabx">Utility</span><span class="tabx">Mask</span><span class="tabx on">Model</span>
      </div>
      <div class="hm-box d-flex flex-column">
        <div class="hm-ptb top d-flex align-items-center">
          <svg class="ic18 sel-on"><use href="#grayb"/></svg><svg class="ic18"><use href="#fcon"/></svg><svg class="ic18"><use href="#fdia"/></svg><svg class="ic18"><use href="#fres"/></svg><svg class="ic18"><use href="#fblk"/></svg><svg class="ic18"><use href="#fgh1"/></svg><svg class="ic18"><use href="#fscr"/></svg>
        </div>
        <div class="hm-ptb d-flex align-items-center">
          <svg class="ic18"><use href="#mblue"/></svg><svg class="drp"><use href="#dropx"/></svg><i class="sep l2"></i><i class="dots l6"></i>
          <svg class="ic18 l9"><use href="#dia"/></svg><svg class="drp n3"><use href="#dropx"/></svg><svg class="ic18 l3"><use href="#mblue"/></svg><svg class="drp n1"><use href="#dropx"/></svg>
          <svg class="ic18 l6"><use href="#curs"/></svg><svg class="ic18 l4"><use href="#bin"/></svg>
          <svg class="ic18 l1" viewBox="0 0 20 20"><use href="#eye"/><text x="10" y="18" class="eyet">+/−</text></svg>
          <svg class="ic18 l2" viewBox="0 0 20 20"><use href="#eye"/><text x="10" y="18" class="eyet">1</text></svg>
          <svg class="ic18 l2"><use href="#und"/></svg>
        </div>
        <div class="hm-treewrap d-flex">
          <div class="hm-tree">
            <div class="hm-thead d-flex align-items-center"><span class="cname">Entities</span><span class="cid">ID</span><span class="cclr"><svg width="11" height="11"><use href="#clr"/></svg></span></div>
            <div class="trow d-flex align-items-center pad-w"><i class="vl a"></i><i class="pm in p"></i><svg class="tic gap-a"><use href="#fb"/></svg><svg class="tic gap-b"><use href="#fm"/></svg><span class="nm">wheel2</span><span class="idn">2</span><i class="swt sw-g"></i></div>
            <div class="trow d-flex align-items-center pad-w"><i class="vl a"></i><i class="pm in p"></i><svg class="tic gap-a"><use href="#fb"/></svg><svg class="tic gap-b"><use href="#fm"/></svg><span class="nm">wheel2.1</span><span class="idn">3</span><i class="swt sw-g"></i></div>
            <div class="trow d-flex align-items-center pad-w"><i class="vl a"></i><i class="pm in p"></i><svg class="tic gap-a"><use href="#fb"/></svg><svg class="tic gap-b"><use href="#fm"/></svg><span class="nm">wheel2.3</span><span class="idn">5</span><i class="swt sw-g"></i></div>
            <div class="trow d-flex align-items-center pad-w"><i class="vl a"></i><i class="pm in p"></i><svg class="tic gap-a"><use href="#fb"/></svg><svg class="tic gap-b"><use href="#fm"/></svg><span class="nm">wheel2.2</span><span class="idn">4</span><i class="swt sw-g"></i></div>
            <div class="trow d-flex align-items-center pad-c"><i class="pm"></i><svg class="tic gap-c"><use href="#cmpf"/></svg><span class="nm">Component (5)</span></div>
            <div class="trow d-flex align-items-center pad-k"><i class="vl b"></i><i class="hl"></i><svg class="tic gap-a"><use href="#pane"/></svg><svg class="tic gap-c"><use href="#msq"/></svg><span class="nm b">Body_D_11_250_2S</span><span class="idn">1</span><i class="swt sw-l"></i></div>
            <div class="trow d-flex align-items-center pad-k"><i class="vl b"></i><i class="hl"></i><svg class="tic gap-a"><use href="#pane"/></svg><svg class="tic gap-c"><use href="#msq"/></svg><span class="nm">wheel2</span><span class="idn">2</span><i class="swt sw-b"></i></div>
            <div class="trow d-flex align-items-center pad-k"><i class="vl b"></i><i class="hl"></i><svg class="tic gap-a"><use href="#pane"/></svg><svg class="tic gap-c"><use href="#msq"/></svg><span class="nm">wheel2.1</span><span class="idn">3</span><i class="swt sw-y"></i></div>
            <div class="trow d-flex align-items-center pad-k"><i class="vl b"></i><i class="hl"></i><svg class="tic gap-a"><use href="#pane"/></svg><svg class="tic gap-c"><use href="#msq"/></svg><span class="nm">wheel2.2</span><span class="idn">4</span><i class="swt sw-m"></i></div>
            <div class="trow d-flex align-items-center pad-k"><i class="vl b half"></i><i class="hl"></i><svg class="tic gap-a"><use href="#pane"/></svg><svg class="tic gap-c"><use href="#msq"/></svg><span class="nm">wheel2.3</span><span class="idn">5</span><i class="swt sw-r"></i></div>
            <div class="trow d-flex align-items-center pad-c"><i class="pm"></i><svg class="tic gap-c"><use href="#flab"/></svg><span class="nm">Title (1)</span></div>
            <div class="trow d-flex align-items-center pad-k"><i class="vl b half"></i><i class="hl"></i><svg class="tic gap-c"><use href="#lab"/></svg><span class="nm">Model Info</span><span class="idn">1</span><i class="swt sw-w"></i></div>
          </div>
          <div class="hm-sb d-flex flex-column"><svg class="ar"><use href="#cup"/></svg><div class="trk"></div><svg class="ar dn mt-auto"><use href="#cdn"/></svg></div>
        </div>
        <div class="hm-sash"></div>
        <div class="hm-prop">
          <div class="hm-phead d-flex align-items-center"><span class="pc">Name</span><span class="pc flex-grow-1">Value</span></div>
          <div class="prow"></div><div class="prow"></div><div class="prow"></div><div class="prow"></div><div class="prow"></div><div class="prow"></div><div class="prow"></div><div class="prow"></div><div class="prow"></div><div class="prow"></div><div class="prow"></div><div class="prow"></div><div class="prow"></div><div class="prow"></div><div class="prow"></div><div class="prow"></div>
        </div>
      </div>
    </div>
    <div class="hm-sashv"></div>
    <div class="hm-right d-flex flex-column">
      <div class="hm-top d-flex">
        <div class="hm-vtb d-flex flex-column">
          <i class="dots h"></i>
          <svg class="ic"><use href="#v1"/></svg>
          <svg class="ic"><use href="#mred"/></svg>
          <svg class="ic"><use href="#v3"/></svg>
          <svg class="ic"><use href="#mesh"/></svg>
          <svg class="ic"><use href="#v5"/></svg>
          <svg class="ic"><use href="#v6"/></svg>
          <svg class="ic"><use href="#bino"/></svg>
          <svg class="ic"><use href="#num"/></svg>
          <svg class="ic"><use href="#scal"/></svg>
          <svg class="ic sel-on"><use href="#abc1"/></svg>
          <svg class="ic sel-on"><use href="#abc2"/></svg>
          <svg class="ic"><use href="#swap"/></svg>
          <svg class="ic sel-on"><use href="#pan4"/></svg>
        </div>
        <div class="hm-gfx">
          <svg viewBox="264 80 729 305" preserveAspectRatio="none">
            <g stroke-linejoin="round">
              <path d="M618 227C622 224 627 222 630 221C640 222 648 230 653 240C656 246 658 252 658 258V263L640 271 618 275Z" fill="#000" stroke="#f015f0"/>
              <path d="M618 233C627 240 633 250 634 260V272M625 232C633 240 638 250 639 260L640 270M639 262L658 255" fill="none" stroke="#f015f0" stroke-width=".9"/>
              <path d="M587 203L595 204 603 209 613 220 620 227 628 250 632 262 660 265 703 290 718 300 727 320 732 333 697 352 657 340 640 345 627 337 612 333 580 317 553 315 530 303 528 270 555 258 568 233 580 208Z" fill="#000"/>
              <path d="M703 285C704 276 708 270 712 268L730 261C737 262 743 267 747 273C752 281 756 289 757 297C758 304 757 309 755 312L733 323 720 310C712 300 705 293 703 285Z" fill="#000" stroke="#e8e810" stroke-width="1.100"/>
              <path d="M710 270C722 276 731 286 732 297V320M718 268C729 276 736 286 737 297L735 320" fill="none" stroke="#e8e810" stroke-width=".9"/>
              <g fill="none" stroke="#e4e4e4" stroke-width=".9" stroke-linecap="round">
                <path d="M581 208l1 3M584 205l2-1M590 205l2 0M597 205l2-1M608 212l3 2M571 226l2 1 1-2M566 241l1 2 2-1M574 236l1 2M567 256v2"/>
                <path d="M567 280l3 4 1 3M570 279l3 5 2 3M574 288l2 4M576 294l1 2M540 284l1-3M545 282v3M548 279l-1 3M553 281v3M525 280l4-2M525 285l4-2M525 289l4-2M526 293l3-1M547 311l3 2M551 310l2 4M545 312l2 1"/>
                <path d="M619 286l2 3M622 295l1 3M619 305l3 3 1 2M617 306l1 3M629 310l1 2M600 270l1 2M625 275l1 2M635 280h2M654 307l2 2M650 308v2M665 308l2-1M666 312v2M680 313l3-2M682 316l3 2M678 320l3 1M697 332l2 3M699 339l2-2M692 342l2 2M694 349l2 1M718 290l2 3M719 298l3 2M716 303l2 2M714 306l2 2M722 308l3 3M727 325v3M729 330v2M627 337l8-3 10-2 8 1M628 339l8-1 9-1 8 1M639 260l1 2M652 261l2 1M645 290v2M660 318v2M671 340l2-2"/>
                <path d="M605 322l2 2M610 315v2M600 315l2-2M590 312l2 2M640 330l2 2M630 320v2"/>
              </g>
              <path d="M483 279C490 273 497 270 503 271 512 272 518 278 522 288 525 294 527 300 528 305 528 312 526 316 522 319L503 331C498 333 494 330 490 327 482 320 476 310 475 300 475 291 478 284 483 279Z" fill="#000" stroke="#1a1aff"/>
              <path d="M484 283C494 288 503 302 504 316L503 331M490 278C500 284 509 298 510 312L508 327M505 313L528 305" fill="none" stroke="#1a1aff" stroke-width=".9"/>
              <path d="M583 320C590 315 597 312 603 312 612 314 618 322 622 331 626 338 628 342 628 348 628 354 627 358 625 361L604 372C598 375 594 371 590 366 581 356 575 347 574 337 574 330 578 324 583 320Z" fill="#000" stroke="#f03814"/>
              <path d="M585 323C595 330 602 342 603 353V368M595 320C604 327 609 342 610 353L608 367M603 353L628 345" fill="none" stroke="#f03814" stroke-width=".9"/>
            </g>
            <path d="M295 366V345" stroke="#19d419" stroke-width="1.200"/><path d="M293 352l2-8 2 8z" fill="#19d419"/>
            <path d="M295 366l-14-6" stroke="#2a2ad0" stroke-width="1.200"/><path d="M281 359l8 3-5 0z" fill="#2a2ad0" stroke="#2a2ad0"/>
            <path d="M295 366l-20 8" stroke="#e01818" stroke-width="1.200"/><path d="M281 369l-6 5 7 0z" fill="#e01818"/>
            <text x="292" y="338" font-family="Liberation Sans" font-size="10" fill="#e4e4e4">Y</text>
            <text x="276" y="359" font-family="Liberation Sans" font-size="10" fill="#e4e4e4">Z</text>
            <text x="270" y="378" font-family="Liberation Sans" font-size="10" fill="#e4e4e4">X</text>
          </svg>
          <span class="hm-info">Model Info: C:/Users/SmAk64/Desktop/SmAk/IIT/AXLR8R/XLR 16-E/Hypermesh files/2S_11.hm*</span>
        </div>
      </div>
      <div class="hm-tb one hm-rt d-flex align-items-center">
        <i class="dots"></i>
        <svg class="ic l1"><use href="#opnc"/></svg><svg class="ic"><use href="#fbl"/></svg><svg class="ic l1"><use href="#fres"/></svg><svg class="ic"><use href="#fblk"/></svg><svg class="ic l1"><use href="#fdn"/></svg><svg class="ic l1"><use href="#fax"/></svg><svg class="drp"><use href="#dropx"/></svg>
        <i class="sep l5"></i>
        <svg class="ic l3"><use href="#xred"/></svg><svg class="ic"><use href="#stck"/></svg><svg class="ic l1"><use href="#forg"/></svg><svg class="ic l1"><use href="#nums"/></svg>
        <i class="dots l3"></i>
        <div class="cmb a l1 d-flex align-items-center"><svg class="ic14" viewBox="0 0 14 18"><use href="#cyl2"/></svg><span class="cn">Auto</span><span class="ca"></span></div>
        <svg class="ic n1"><use href="#wcyl"/></svg><svg class="drp l1"><use href="#dropx"/></svg>
        <svg class="ic l1"><use href="#bcyl"/></svg><svg class="drp l1"><use href="#dropx"/></svg>
        <svg class="ic l1"><use href="#bcub"/></svg>
        <i class="sep l3"></i>
        <div class="cmb c l4 d-flex align-items-center"><svg class="ic14" viewBox="0 0 14 18"><use href="#scub2"/></svg><span class="cn">By Comp</span><span class="ca"></span></div>
        <svg class="ic l1"><use href="#wcub"/></svg><svg class="drp l1"><use href="#dropx"/></svg>
        <svg class="ic"><use href="#scub"/></svg><svg class="drp l1"><use href="#dropx"/></svg>
        <svg class="ic l2"><use href="#lin2"/></svg><svg class="drp"><use href="#dropx"/></svg>
        <svg class="ic l1"><use href="#dg"/></svg><svg class="drp l1"><use href="#dropx"/></svg>
        <svg class="ic l1"><use href="#dia"/></svg><svg class="drp l1"><use href="#dropx"/></svg>
        <svg class="ic l1"><use href="#sqs"/></svg><svg class="ic l1"><use href="#mon"/></svg>
        <i class="dots l4"></i>
        <svg class="ic"><use href="#star"/></svg>
      </div>
      <div class="hm-tb hm-rt d-flex align-items-center">
        <i class="dots"></i>
        <svg class="ic l1"><use href="#grd"/></svg><svg class="drp"><use href="#dropx"/></svg><svg class="ic"><use href="#wrn"/></svg>
        <i class="sep l5"></i>
        <svg class="ic l3"><use href="#larr"/></svg><svg class="ic l1"><use href="#rarr"/></svg><svg class="ic l1"><use href="#und"/></svg>
        <i class="sep l3"></i>
        <svg class="ic l4"><use href="#mns"/></svg><svg class="ic"><use href="#pls"/></svg><svg class="ic l1"><use href="#und"/></svg>
      </div>
      <div class="hm-panel d-flex">
        <div class="hm-col w1 d-flex flex-column"><button class="btn mbtn">planes</button><button class="btn mbtn">cones</button><button class="btn mbtn">spheres</button><button class="btn mbtn">torus</button></div>
        <div class="hm-col w2 d-flex flex-column"><button class="btn mbtn">ruled</button><button class="btn mbtn">spline</button><button class="btn mbtn">skin</button><button class="btn mbtn">drag</button><button class="btn mbtn">spin</button><button class="btn mbtn">line drag</button><button class="btn mbtn">elem offset</button></div>
        <div class="hm-col w3 d-flex flex-column"><button class="btn mbtn">connectors</button><button class="btn mbtn">HyperLaminate</button><button class="btn mbtn">composites</button></div>
        <div class="hm-col w4 d-flex flex-column"><button class="btn mbtn">automesh</button><button class="btn mbtn">shrink wrap</button><button class="btn mbtn">smooth</button><button class="btn mbtn">qualityindex</button><button class="btn mbtn">elem cleanup</button><button class="btn mbtn">mesh edit</button></div>
        <div class="hm-col w5 d-flex flex-column"><button class="btn mbtn">edit element</button><button class="btn mbtn">split</button><button class="btn mbtn">replace</button><button class="btn mbtn">detach</button><button class="btn mbtn">order change</button><button class="btn mbtn">config edit</button><button class="btn mbtn">elem types</button></div>
        <div class="hm-rad d-flex flex-column">
          <label><input type="radio" name="pg">Geom</label><label><input type="radio" name="pg">1D</label><label><input type="radio" name="pg" checked>2D</label><label><input type="radio" name="pg">3D</label><label><input type="radio" name="pg">Analysis</label><label><input type="radio" name="pg">Tool</label><label><input type="radio" name="pg">Post</label>
        </div>
      </div>
      <div class="hm-rule"></div>
    </div>
  </div>
  <div class="hm-status d-flex align-items-center">
    <span class="stx">2-D Elements and Surfaces</span>
    <span class="cellb w92"></span><span class="cellb w91">Module Model</span><span class="cellb w104"><i class="chipb"></i>Body_D_11_250_2S</span><span class="cellb w102"></span>
  </div>
  <div class="hm-foot"></div>
</div>
</body></html>
